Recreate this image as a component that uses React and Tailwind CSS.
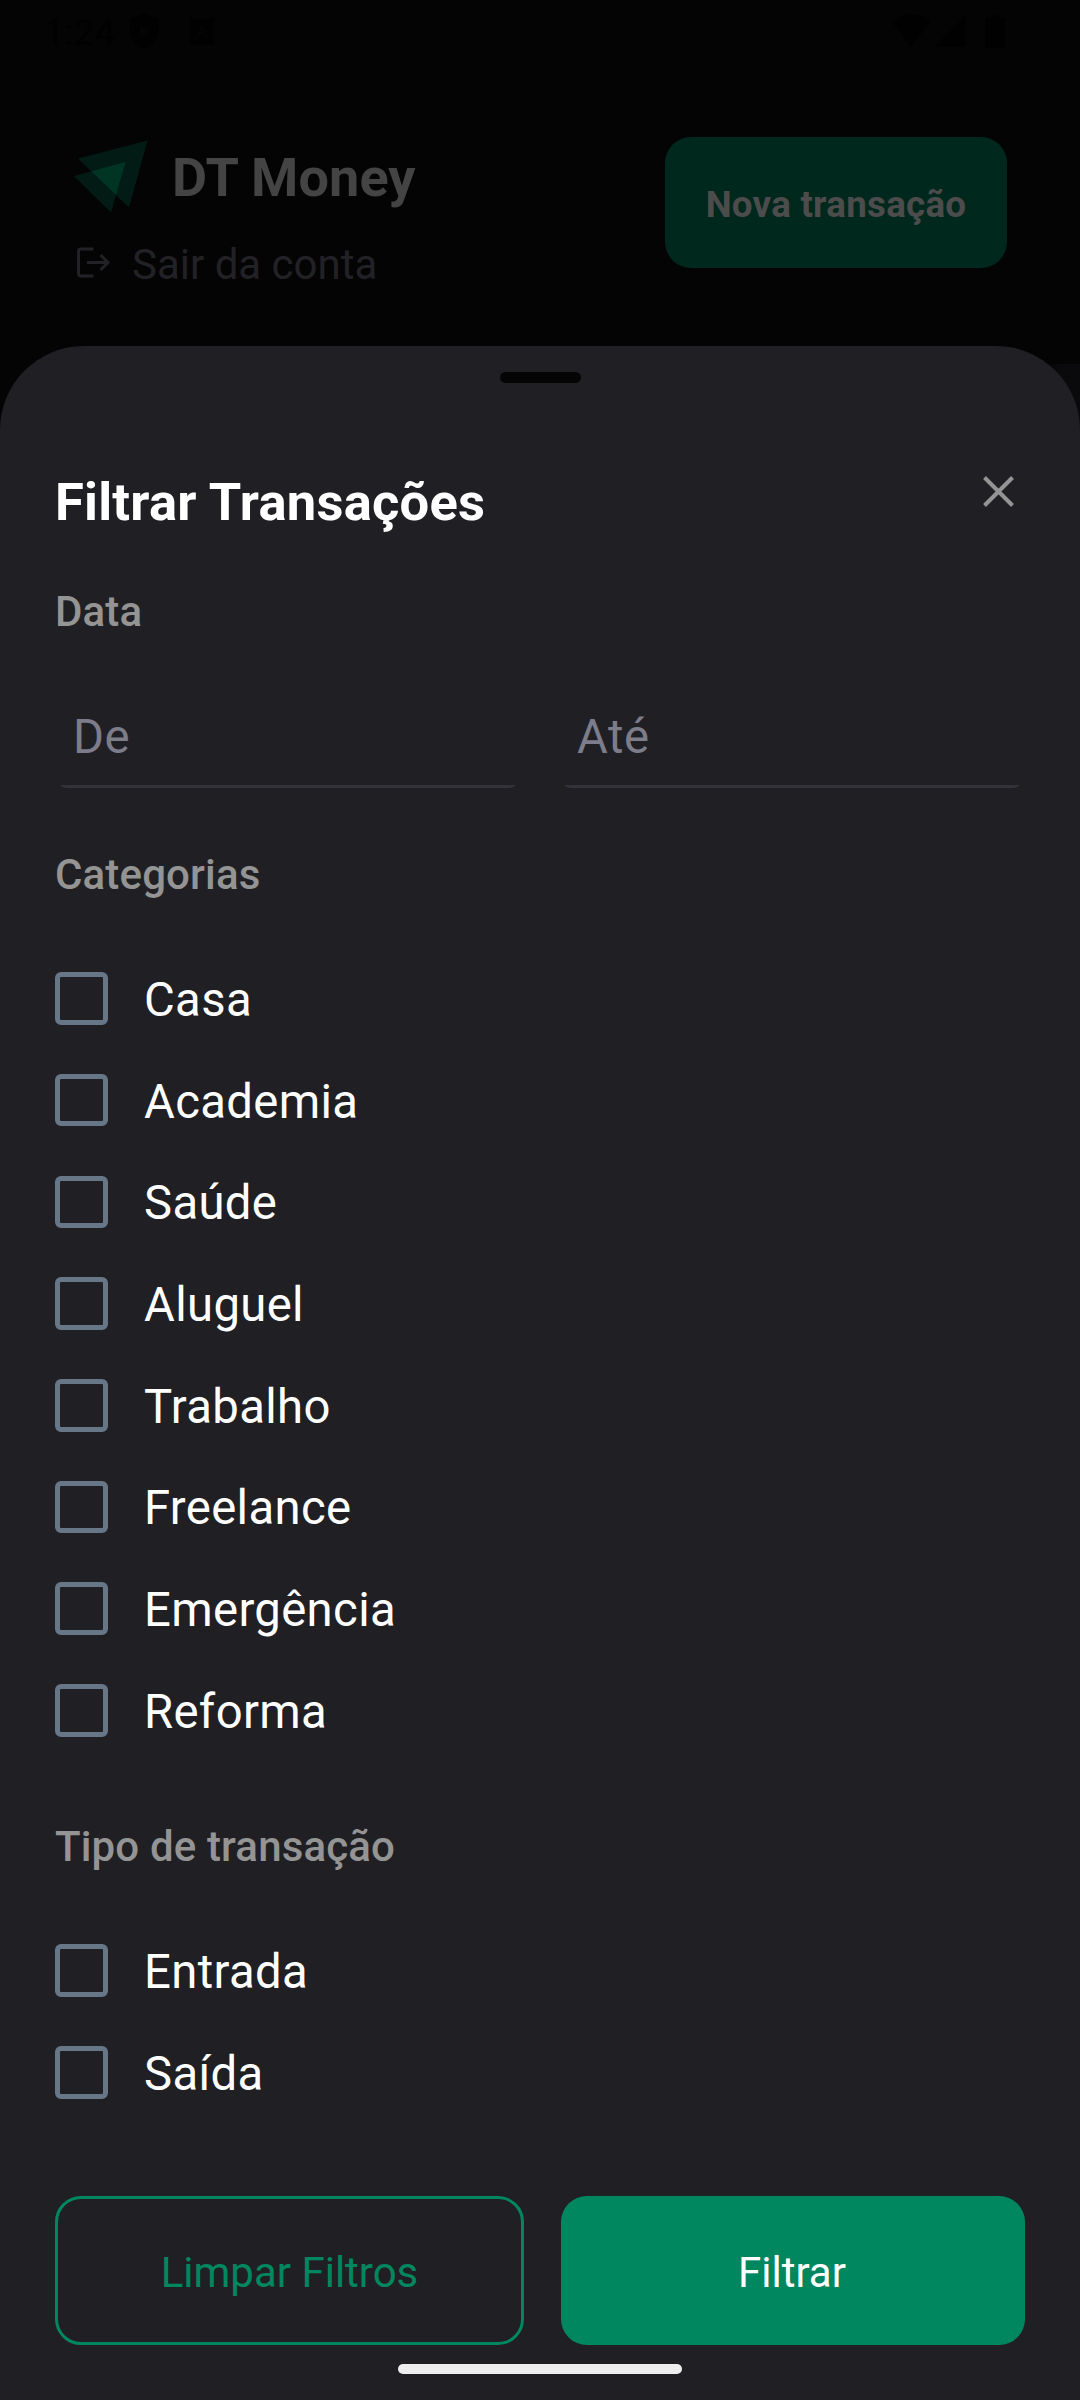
const categories = ["Casa", "Academia", "Saúde", "Aluguel", "Trabalho", "Freelance", "Emergência", "Reforma"];
const types = ["Entrada", "Saída"];

function StatusBar() {
  return (
    <div className="flex h-16 items-start justify-between pl-[44px] pr-[75px] pt-[12px] text-[#010101]">
      <div className="flex">
        <span className="w-[86px] text-[37px] leading-[42px]">1:24</span>
        <svg className="mt-[2px] h-[35px] w-[29px]" viewBox="0 0 29 35" fill="currentColor" fillRule="evenodd">
          <path d="M14.500 0L29 5V16C29 25 22 32 14.500 35C7 32 0 25 0 16V5ZM10 10V24L21 17Z" />
        </svg>
        <svg className="ml-[31px] mt-[6px] h-[27px] w-[24px]" viewBox="0 0 24 27" fill="currentColor" fillRule="evenodd">
          <path d="M2 0H22Q24 0 24 2V25Q24 27 22 27H2Q0 27 0 25V2Q0 0 2 0ZM12 6L5 20H8L9.500 17H14.500L16 20H19ZM12 11L13.500 14.500H10.500Z" />
        </svg>
      </div>
      <div className="flex pt-[2px]">
        <svg className="h-[34px] w-[38px]" viewBox="0 0 38 34" fill="currentColor">
          <path d="M0 8Q19 -8 38 8L19 33Z" />
        </svg>
        <svg className="ml-[4px] h-[34px] w-[32px]" viewBox="0 0 32 34" fill="currentColor">
          <path d="M32 1V33H0Z" />
        </svg>
        <svg className="ml-[19px] h-[34px] w-[20px]" viewBox="0 0 20 34" fill="currentColor">
          <path d="M6 0H14V4H18Q20 4 20 6V32Q20 34 18 34H2Q0 34 0 32V6Q0 4 2 4H6Z" />
        </svg>
      </div>
    </div>
  );
}

function Header() {
  return (
    <header className="flex items-start justify-between pl-[74px] pr-[73px] pt-[73px]">
      <div>
        <div className="flex h-[76px] items-start">
          <svg className="mt-[3px] h-[73px] w-[74px] shrink-0" viewBox="0 0 74 73">
            <path d="M4 18.500L73.500 0.500L55 67.500Z" fill="#021c15" />
            <path d="M0 36L51.500 22L37 72.500Z" fill="#021c15" />
            <path d="M17.300 31.300L51.500 22L42 55Z" fill="#003524" />
          </svg>
          <span className="ml-[24px] mt-[9px] text-[54px] font-bold leading-[64px] tracking-[0.1px] text-[#444445]">DT Money</span>
        </div>
        <div className="mt-[25px] flex items-start text-[#222226]">
          <svg className="ml-[3px] mt-[9px] h-[31px] w-[34px]" viewBox="0 0 34 31" fill="none" stroke="currentColor" strokeWidth="3">
            <path d="M16.500 2H4Q1.500 2 1.500 4.500V26.500Q1.500 29 4 29H16.500M10 15.500H31M23.500 8L31 15.500L23.500 23" />
          </svg>
          <span className="ml-[21px] mt-[2px] text-[42px] leading-[49px]">Sair da conta</span>
        </div>
      </div>
      <button className="h-[131px] w-[342px] rounded-[26px] bg-[#00281c] pt-[4px] text-[36.75px] font-bold tracking-[0.25px] text-[#4c4c4c]">
        Nova transação
      </button>
    </header>
  );
}

function DateInput({ label }) {
  return (
    <div className="flex h-[104px] w-[454px] flex-col justify-between">
      <span className="pl-[12px] pt-[25px] text-[47.25px] leading-[56px] tracking-[0.5px] text-[#7c7c8a]">{label}</span>
      <span className="h-[3px] rounded-[0_0_6px_6px/0_0_3px_3px] bg-[#323238]" />
    </div>
  );
}

function CheckRow({ label }) {
  return (
    <label className="flex h-[52.5px] items-center">
      <span className="h-[52.5px] w-[53px] rounded-[6px] border-[5px] border-[#677787]" />
      <span className="ml-[36px] pt-[3px] text-[47.25px] leading-[56px] tracking-[0.35px] text-white">{label}</span>
    </label>
  );
}

function SectionTitle({ children }) {
  return <h2 className="text-[42px] font-medium leading-[50px] tracking-[0.15px] text-[#949494]">{children}</h2>;
}

export default function App() {
  return (
    <div className="flex h-[2400px] w-[1080px] flex-col bg-[#040405] font-['Roboto',sans-serif]">
      <div className="h-[346px] shrink-0">
        <StatusBar />
        <Header />
      </div>
      <div className="flex flex-1 flex-col bg-[linear-gradient(90deg,transparent_1040px,#0a0a0c_1060px)] bg-[position:0_18px] bg-no-repeat">
        <main className="flex flex-1 flex-col rounded-t-[84px] bg-[#202024] px-[55px]">
          <div className="mt-[26px] h-[11px] w-[81px] self-center rounded-full bg-[#050505]" />
          <div className="mt-[88px] flex h-[62px] items-start justify-between">
            <h1 className="text-[52.5px] font-bold leading-[62px] tracking-[0.25px] text-white">Filtrar Transações</h1>
            <svg className="mr-[11px] mt-[5px] h-[31px] w-[31px]" viewBox="0 0 31 31" fill="none" stroke="#949494" strokeWidth="4">
              <path d="M1.500 1.500L29.500 29.500M29.500 1.500L1.500 29.500" />
            </svg>
          </div>
          <div className="mt-[54px]"><SectionTitle>Data</SectionTitle></div>
          <div className="mt-[47px] flex justify-between px-[6px]">
            <DateInput label="De" />
            <DateInput label="Até" />
          </div>
          <div className="mt-[62px]"><SectionTitle>Categorias</SectionTitle></div>
          <div className="mt-[72.3px] flex flex-col gap-[49.2px]">
            {categories.map((c) => <CheckRow key={c} label={c} />)}
          </div>
          <div className="mt-[85.5px]"><SectionTitle>Tipo de transação</SectionTitle></div>
          <div className="mt-[72.3px] flex flex-col gap-[49.2px]">
            {types.map((t) => <CheckRow key={t} label={t} />)}
          </div>
          <div className="mt-[97.1px] flex h-[149px] justify-between text-[42px]">
            <button className="w-[469px] rounded-[26px] border-[3px] border-[#00875f] pt-[5px] text-[#00875f]">Limpar Filtros</button>
            <button className="w-[464px] rounded-[26px] bg-[#00875f] pt-[5px] pr-[2px] text-white">Filtrar</button>
          </div>
          <div className="mt-[19px] h-[10px] w-[284px] self-center rounded-full bg-[#eeeeee]" />
        </main>
      </div>
    </div>
  );
}
